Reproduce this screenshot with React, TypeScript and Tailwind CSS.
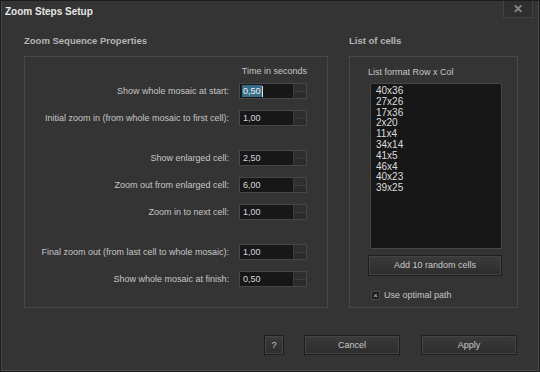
import React from 'react';

const rows: { label: string; value: string; gapBefore?: boolean; selected?: boolean }[] = [
  { label: 'Show whole mosaic at start:', value: '0,50', selected: true },
  { label: 'Initial zoom in (from whole mosaic to first cell):', value: '1,00' },
  { label: 'Show enlarged cell:', value: '2,50', gapBefore: true },
  { label: 'Zoom out from enlarged cell:', value: '6,00' },
  { label: 'Zoom in to next cell:', value: '1,00' },
  { label: 'Final zoom out (from last cell to whole mosaic):', value: '1,00', gapBefore: true },
  { label: 'Show whole mosaic at finish:', value: '0,50' },
];

const cells = ['40x36', '27x26', '17x36', '2x20', '11x4', '34x14', '41x5', '46x4', '40x23', '39x25'];

const SpinInput = ({ value, selected }: { value: string; selected?: boolean }) => (
  <div className="flex h-[16px] w-[68px] border border-[#474747] bg-[#171717]">
    <div className="flex flex-1 items-center pl-[2px] text-[#d8d8d8]">
      {selected ? (
        <span className="flex items-center">
          <span className="bg-[#3a6d86] px-[1px] leading-[12px] text-[#e8f2f8]">{value}</span>
          <span className="h-[11px] w-px bg-[#e0e0e0]" />
        </span>
      ) : (
        <span className="px-[1px]">{value}</span>
      )}
    </div>
    <div className="flex w-[13px] flex-col border-l border-[#3a3a3a] bg-[#2b2b2b]">
      <div className="flex-1 border-b border-[#3e3e3e] bg-[#2f2f2f]" />
      <div className="flex-1 bg-[#2b2b2b]" />
    </div>
  </div>
);

const Button = ({ children, className }: { children: React.ReactNode; className?: string }) => (
  <div
    className={`flex items-center justify-center border border-[#1f1f1f] bg-gradient-to-b from-[#3b3b3b] to-[#2d2d2d] text-[#c9c9c9] shadow-[inset_0_0_0_1px_#444] ${className ?? ''}`}
  >
    {children}
  </div>
);

export default function App() {
  return (
    <div
      className="flex h-[372px] w-[540px] flex-col border border-[#1c1c1c] bg-[#343434] text-[9px] leading-none text-[#c6c6c6]"
      style={{ fontFamily: '"Liberation Sans", Arial, sans-serif' }}
    >
      <div className="flex h-full flex-col border border-[#4b4b4b] border-t-0 border-r-[#4b4b4b]">
        {/* title bar */}
        <div className="flex h-[20px] items-start justify-between">
          <div className="pl-[3px] pt-[6px] text-[10px] font-bold text-[#e6e6e6]">Zoom Steps Setup</div>
          <div className="mr-[5px] flex h-[17px] w-[30px] items-center justify-center border border-t-0 border-[#424242] bg-[#2f2f2f] text-[12px] font-bold text-[#8a8a8a]">
            ✕
          </div>
        </div>

        <div className="flex flex-1 pl-[22px] pt-[15px]">
          {/* left column */}
          <div className="flex w-[304px] flex-col">
            <div className="h-[20px] text-[9.5px] font-bold text-[#b4b4b4]">Zoom Sequence Properties</div>
            <div className="flex h-[252px] flex-col items-end border border-[#484848] pr-[20px] pt-[10px]">
              <div className="mb-[7px] text-[#c6c6c6]">Time in seconds</div>
              {rows.map((r) => (
                <div key={r.label} className={`flex h-[27px] items-start gap-[10px] ${r.gapBefore ? 'mt-[13px]' : ''}`}>
                  <span className="pt-[4px]">{r.label}</span>
                  <SpinInput value={r.value} selected={r.selected} />
                </div>
              ))}
            </div>
          </div>

          {/* right column */}
          <div className="ml-[21px] flex w-[169px] flex-col">
            <div className="h-[20px] text-[9.5px] font-bold text-[#b4b4b4]">List of cells</div>
            <div className="flex h-[252px] flex-col border border-[#484848] pl-[18px] pt-[11px]">
              <div className="mb-[6px]">List format Row x Col</div>
              <div className="ml-[2px] flex h-[166px] w-[132px] flex-col border border-[#474747] bg-[#171717] pl-[5px] pt-[2px] text-[10px] text-[#dedede]">
                {cells.map((c) => (
                  <div key={c} className="h-[10.8px] leading-[10.8px]">
                    {c}
                  </div>
                ))}
              </div>
              <Button className="mt-[6px] h-[21px] w-[134px]">Add 10 random cells</Button>
              <div className="ml-[3px] mt-[15px] flex items-center gap-[4px]">
                <div className="flex h-[9px] w-[9px] items-center justify-center border border-[#4a4a4a] bg-[#1c1c1c] text-[8px] text-[#cfcfcf]">
                  ×
                </div>
                <span>Use optimal path</span>
              </div>
            </div>
          </div>
        </div>

        {/* footer */}
        <div className="flex justify-end gap-[20px] pb-[15px] pr-[21px]">
          <Button className="h-[20px] w-[20px]">?</Button>
          <Button className="h-[20px] w-[96px]">Cancel</Button>
          <Button className="ml-[1px] h-[20px] w-[96px]">Apply</Button>
        </div>
      </div>
    </div>
  );
}
